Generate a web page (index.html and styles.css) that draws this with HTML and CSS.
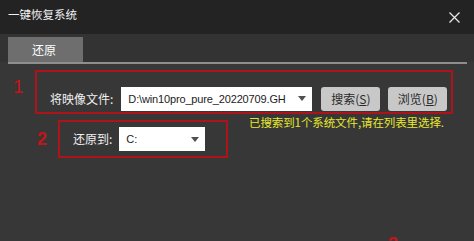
FILE: index.html
```html
<!DOCTYPE html>
<html lang="zh-CN">
<head>
<meta charset="utf-8">
<title>一键恢复系统</title>
<link rel="stylesheet" href="styles.css">
</head>
<body>
<div class="window">
  <div class="titlebar">
    <span class="title">一键恢复系统</span>
    <svg class="close" width="11" height="11" viewBox="0 0 11 11"><path d="M0.5 0.5 L10.5 10.5 M10.5 0.5 L0.5 10.5" stroke="#e6e6e6" stroke-width="1.3" fill="none"/></svg>
  </div>
  <div class="tabstrip">
    <div class="tab">还原</div>
  </div>
  <div class="tabline"></div>
  <div class="content">
    <div class="row row1">
      <div class="num num1">1</div>
      <div class="box box1">
        <span class="label">将映像文件:</span>
        <div class="combo combo1"><span class="combo-text">D:\win10pro_pure_20220709.GH</span><span class="arrow"></span></div>
        <button class="btn btn1">搜索(<u>S</u>)</button>
        <button class="btn btn2">浏览(<u>B</u>)</button>
      </div>
    </div>
    <div class="row row2">
      <div class="num num2">2</div>
      <div class="box box2">
        <span class="label">还原到:</span>
        <div class="combo combo2"><span class="combo-text">C:</span><span class="arrow"></span></div>
      </div>
      <div class="hint">已搜索到1个系统文件,请在列表里选择.</div>
    </div>
    <div class="row row3">
      <div class="num num3">3</div>
    </div>
  </div>
</div>
</body>
</html>
```
FILE: styles.css
```css
html, body {
  margin: 0;
  padding: 0;
}
body {
  width: 474px;
  height: 241px;
  overflow: hidden;
  background: #373737;
  font-family: "Noto Sans CJK SC", sans-serif;
  font-size: 12px;
}
.window {
  display: flex;
  flex-direction: column;
  height: 241px;
  overflow: hidden;
}
.titlebar {
  height: 34px;
  flex: none;
  box-sizing: border-box;
  background: #232323;
  display: flex;
  align-items: center;
  justify-content: space-between;
  padding: 0 14px 0 8px;
}
.title {
  color: #f2f2f2;
  font-size: 11.5px;
  line-height: 14px;
  margin-bottom: 7px;
}
.close {
  display: block;
}
.tabstrip {
  height: 28px;
  flex: none;
  box-sizing: border-box;
  background: #333333;
  display: flex;
  align-items: flex-end;
  padding-left: 8px;
}
.tab {
  width: 75px;
  height: 25px;
  background: #6e6e6e;
  color: #ffffff;
  font-size: 12px;
  display: flex;
  align-items: center;
  justify-content: center;
  padding-right: 3px;
  box-sizing: border-box;
}
.tabline {
  height: 2px;
  flex: none;
  background: #8e8e8e;
  margin: 0 7px 0 8px;
}
.content {
  display: flex;
  flex-direction: column;
}
.row {
  display: flex;
  align-items: flex-start;
}
.row1 {
  margin-top: 6px;
}
.row2 {
  margin-top: 6px;
}
.num {
  color: #c3141b;
  font-family: "Liberation Sans", sans-serif;
  box-sizing: border-box;
}
.num1 {
  width: 35px;
  padding-left: 13px;
  font-size: 19px;
  line-height: 19px;
  margin-top: 7px;
}
.num2 {
  width: 58px;
  padding-left: 37px;
  font-size: 18px;
  line-height: 18px;
  margin-top: 10px;
  font-weight: bold;
}
.row3 {
  margin-top: 77px;
}
.num3 {
  padding-left: 388px;
  font-size: 18px;
  line-height: 18px;
  font-weight: bold;
}
.box {
  border: 2px solid #ad141a;
  box-sizing: border-box;
  display: flex;
  align-items: center;
  padding-left: 13px;
}
.box1 {
  width: 418px;
  height: 44px;
  padding-top: 13px;
}
.box2 {
  width: 170px;
  height: 38px;
}
.label {
  color: #f0f0f0;
  font-size: 12px;
  line-height: 14px;
}
.combo {
  background: #ffffff;
  height: 24px;
  box-sizing: border-box;
  display: flex;
  align-items: center;
  justify-content: space-between;
  padding: 0 6px 0 7px;
}
.combo1 {
  width: 191px;
  margin-left: 8px;
}
.combo2 {
  width: 86px;
  margin-left: 7px;
}
.combo-text {
  color: #1c1c1c;
  font-family: "Liberation Sans", "Noto Sans CJK SC", sans-serif;
  font-size: 11px;
  letter-spacing: -0.15px;
}
.arrow {
  width: 0;
  height: 0;
  border-left: 4px solid transparent;
  border-right: 4px solid transparent;
  border-top: 5px solid #505050;
}
.btn {
  width: 59px;
  height: 24px;
  border: none;
  border-radius: 3px;
  background: #c8c8c8;
  color: #2a2a2a;
  font-family: "Noto Sans CJK SC", sans-serif;
  font-size: 12px;
  padding: 0;
}
.btn1 {
  margin-left: 9px;
}
.btn2 {
  margin-left: 8px;
}
.hint {
  color: #e8e82c;
  font-size: 11.5px;
  line-height: 14px;
  margin-left: 21px;
  margin-top: -5px;
  white-space: nowrap;
  letter-spacing: -0.1px;
}
```
